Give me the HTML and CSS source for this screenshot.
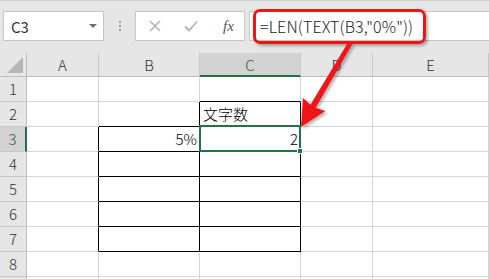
FILE: index.html
```
<!DOCTYPE html>
<html>
	<head>
		<meta charset="utf-8">
		<title>Excel LEN TEXT</title>
		<link rel="stylesheet" href="styles.css">
	</head>
	<body>
		<div id="app">
			<!-- 数式バー -->
			<div class="toolbar">
				<div class="namebox">
					<span class="namebox-text">C3</span>
					<span class="namebox-arrow"></span>
				</div>
				<div class="dots"><i></i><i></i><i></i></div>
				<div class="btnbox">
					<svg class="ico" width="12" height="12" viewBox="0 0 12 12"><path d="M1 1L11 11M11 1L1 11" stroke="#b4b4b4" stroke-width="1.6" fill="none"/></svg>
					<svg class="ico" width="14" height="12" viewBox="0 0 14 12"><path d="M1 6.5L5 10.5L13 1.5" stroke="#b4b4b4" stroke-width="1.8" fill="none"/></svg>
					<span class="fx">fx</span>
				</div>
				<div class="formula">=LEN(TEXT(B3,"0%"))</div>
			</div>

			<!-- シート -->
			<div class="sheet">
				<div class="corner"><span class="tri"></span></div>
				<div class="colhead">A</div>
				<div class="colhead">B</div>
				<div class="colhead sel">C</div>
				<div class="colhead">D</div>
				<div class="colhead">E</div>

				<div class="rowhead">1</div>
				<div class="cell"></div>
				<div class="cell"></div>
				<div class="cell bb"></div>
				<div class="cell"></div>
				<div class="cell"></div>

				<div class="rowhead">2</div>
				<div class="cell"></div>
				<div class="cell br bb"></div>
				<div class="cell br bb txt">文字数</div>
				<div class="cell"></div>
				<div class="cell"></div>

				<div class="rowhead sel">3</div>
				<div class="cell br"></div>
				<div class="cell br bb num">5%</div>
				<div class="cell br bb num">2</div>
				<div class="cell"></div>
				<div class="cell"></div>

				<div class="rowhead">4</div>
				<div class="cell br"></div>
				<div class="cell br bb"></div>
				<div class="cell br bb"></div>
				<div class="cell"></div>
				<div class="cell"></div>

				<div class="rowhead">5</div>
				<div class="cell br"></div>
				<div class="cell br bb"></div>
				<div class="cell br bb"></div>
				<div class="cell"></div>
				<div class="cell"></div>

				<div class="rowhead">6</div>
				<div class="cell br"></div>
				<div class="cell br bb"></div>
				<div class="cell br bb"></div>
				<div class="cell"></div>
				<div class="cell"></div>

				<div class="rowhead">7</div>
				<div class="cell br"></div>
				<div class="cell br bb"></div>
				<div class="cell br bb"></div>
				<div class="cell"></div>
				<div class="cell"></div>

				<div class="rowhead">8</div>
				<div class="cell"></div>
				<div class="cell"></div>
				<div class="cell"></div>
				<div class="cell"></div>
				<div class="cell"></div>

				<div class="rowhead"></div>
				<div class="cell"></div>
				<div class="cell"></div>
				<div class="cell"></div>
				<div class="cell"></div>
				<div class="cell"></div>

				<!-- 選択セル -->
				<div class="selbox"><span class="handle"></span></div>
			</div>

			<!-- 赤枠と矢印 -->
			<div class="callout"></div>
			<svg class="arrow" width="489" height="279" viewBox="0 0 489 279">
				<defs>
					<filter id="sh" x="-20%" y="-20%" width="140%" height="140%">
						<feDropShadow dx="2" dy="2" stdDeviation="1.5" flood-color="#000" flood-opacity="0.3"/>
					</filter>
				</defs>
				<polygon filter="url(#sh)" fill="#f01414" points="301,127 302.9,98 310.5,104.8 348.3,42 352.3,44 315.7,107.8 325.4,111.1"/>
			</svg>
		</div>
	</body>
</html>
```
FILE: styles.css
```
* {
	margin: 0;
	padding: 0;
	box-sizing: border-box;
}

body {
	background-color: #fff;
	font-family: "Noto Sans CJK JP", "Noto Sans", sans-serif;
	color: #000;
}

#app {
	width: 489px;
	height: 279px;
	position: relative;
	overflow: hidden;
}

/* 数式バー */
.toolbar {
	height: 53px;
	background-color: #e6e6e6;
	border-top: 1px solid #d2d2d2;
	display: flex;
	align-items: flex-start;
	padding: 10px 0 0 3px;
}
.namebox {
	width: 101px;
	height: 30px;
	background-color: #fff;
	border: 1px solid #c6c6c6;
	display: flex;
	align-items: center;
	justify-content: space-between;
	padding: 0 6px 0 7px;
}
.namebox-text {
	font-size: 15px;
	color: #333;
}
.namebox-arrow {
	width: 0;
	height: 0;
	border-left: 4px solid transparent;
	border-right: 4px solid transparent;
	border-top: 4px solid #6e6e6e;
}
.dots {
	width: 31px;
	height: 30px;
	display: flex;
	flex-direction: column;
	align-items: center;
	justify-content: center;
	gap: 2px;
}
.dots i {
	display: block;
	width: 2px;
	height: 2px;
	background-color: #a0a0a0;
}
.btnbox {
	width: 110px;
	height: 30px;
	background-color: #fff;
	border: 1px solid #c6c6c6;
	display: flex;
	align-items: center;
	padding-left: 13px;
	gap: 23px;
}
.fx {
	font-family: "Liberation Serif", serif;
	font-style: italic;
	font-size: 15px;
	color: #555;
	margin-left: 2px;
}
.formula {
	flex: 1;
	margin-left: 4px;
	margin-right: -1px;
	height: 30px;
	background-color: #fff;
	border: 1px solid #c6c6c6;
	padding-left: 10px;
	font-size: 16px;
	font-weight: 300;
	letter-spacing: 0.1px;
	line-height: 28px;
	color: #222;
}

/* シート */
.sheet {
	display: grid;
	grid-template-columns: 27px 72px 101px 101px 72px 116px;
	grid-template-rows: 24px repeat(9, 25px);
	background-color: #fff;
	position: relative;
}
.corner {
	background-color: #e6e6e6;
	border-right: 1px solid #bdbdbd;
	border-bottom: 1px solid #bdbdbd;
	position: relative;
}
.tri {
	position: absolute;
	right: 3px;
	bottom: 3px;
	width: 0;
	height: 0;
	border-left: 16px solid transparent;
	border-bottom: 16px solid #b6b6b6;
}
.colhead {
	background-color: #e6e6e6;
	border-right: 1px solid #c8c8c8;
	border-bottom: 1px solid #bdbdbd;
	text-align: center;
	font-size: 15px;
	font-weight: 300;
	line-height: 23px;
	color: #333;
}
.colhead.sel {
	background-color: #d2d2d2;
	border-bottom: 2px solid #217346;
	color: #1f5f3e;
}
.rowhead {
	background-color: #e6e6e6;
	border-right: 1px solid #bdbdbd;
	border-bottom: 1px solid #c8c8c8;
	text-align: center;
	font-size: 15px;
	font-weight: 300;
	line-height: 24px;
	color: #333;
}
.rowhead.sel {
	background-color: #d2d2d2;
	border-right: 2px solid #217346;
	color: #1f5f3e;
}
.cell {
	border-right: 1px solid #d4d4d4;
	border-bottom: 1px solid #d4d4d4;
	font-size: 15px;
	font-weight: 300;
	line-height: 24px;
}
.cell.br {
	border-right-color: #000;
}
.cell.bb {
	border-bottom-color: #000;
}
.cell.txt {
	padding-left: 3px;
}
.cell.num {
	text-align: right;
	padding-right: 2px;
}

.selbox {
	position: absolute;
	left: 199px;
	top: 72px;
	width: 102px;
	height: 27px;
	border: 2px solid #217346;
}
.handle {
	position: absolute;
	right: -4px;
	bottom: -4px;
	width: 6px;
	height: 6px;
	background-color: #217346;
	border: 1px solid #fff;
}

/* 赤枠 */
.callout {
	position: absolute;
	left: 253px;
	top: 9px;
	width: 173px;
	height: 35px;
	border: 3px solid #f01414;
	border-radius: 7px;
	box-shadow: 2px 2px 3px rgba(0,0,0,0.3);
}
.arrow {
	position: absolute;
	left: 0;
	top: 0;
}
```
